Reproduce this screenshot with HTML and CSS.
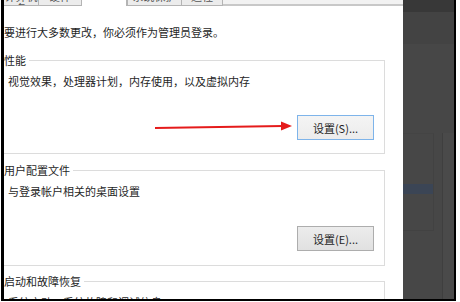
FILE: index.html
```html
<!DOCTYPE html>
<html>
  <head>
    <meta charset="UTF-8" />
    <title>系统属性 - 高级</title>
    <link rel="stylesheet" href="styles.css">
  </head>
  <body>
    <div class="frame">
      <div class="dialog">
        <div class="tabs">
          <div class="tab tab-first"><span>计算机名</span></div>
          <div class="tab tab-hw"><span>硬件</span></div>
          <div class="tab tab-active"></div>
          <div class="tab tab-prot"><span>系统保护</span></div>
          <div class="tab tab-remote"><span>远程</span></div>
          <div class="tab-rest"></div>
        </div>

        <p class="note">要进行大多数更改，你必须作为管理员登录。</p>

        <div class="group">
          <div class="group-title">性能</div>
          <p class="group-desc">视觉效果，处理器计划，内存使用，以及虚拟内存</p>
          <div class="group-actions">
            <button class="btn btn-focus">设置(S)...</button>
          </div>
        </div>

        <div class="group group-profile">
          <div class="group-title">用户配置文件</div>
          <p class="group-desc desc-profile">与登录帐户相关的桌面设置</p>
          <div class="group-actions actions-profile">
            <button class="btn">设置(E)...</button>
          </div>
        </div>

        <div class="group group-startup">
          <div class="group-title">启动和故障恢复</div>
          <p class="group-desc">系统启动、系统故障和调试信息</p>
        </div>

        <svg class="arrow" width="138" height="16" viewBox="0 0 138 16">
          <path d="M0 10 L128 8" stroke="#e51b1b" stroke-width="2" fill="none" />
          <polygon points="126,3.5 137,8 126,12.5" fill="#e51b1b" />
        </svg>
      </div>

      <div class="backdrop">
        <div class="bd-top"></div>
        <div class="bd-bar"></div>
        <div class="bd-body">
          <div class="bd-main">
            <div class="bd-panel">
              <div class="bd-sel"></div>
            </div>
          </div>
          <div class="bd-side"></div>
        </div>
      </div>
    </div>
  </body>
</html>
```

FILE: styles.css
```css
body {
  margin: 0;
  background: #ffffff;
  font-family: "Noto Sans CJK SC", "Microsoft YaHei", sans-serif;
  font-size: 11px;
  color: #1f1f1f;
}

.frame {
  display: flex;
  margin-left: 1px;
  width: 455px;
  height: 301px;
  box-sizing: border-box;
  border-left: 3px solid #000;
  border-right: 2px solid #000;
  border-bottom: 2px solid #000;
  overflow: hidden;
}

.dialog {
  position: relative;
  width: 399px;
  flex: none;
  background: #fff;
  overflow: hidden;
}

/* tab strip, only the bottom edge is visible */
.tabs {
  display: flex;
  height: 6px;
}

.tab {
  height: 6px;
  box-sizing: border-box;
  overflow: hidden;
  background: #ececec;
  border-right: 1px solid #b4b4b4;
  border-bottom: 1px solid #b4b4b4;
  text-align: center;
  color: #555;
}

.tab span {
  display: block;
  margin-top: -10px;
  line-height: 12px;
}

.tab-first {
  width: 35px;
}

.tab-hw {
  width: 43px;
}

.tab-active {
  width: 45px;
  background: #fff;
  border-bottom: none;
}

.tab-prot {
  width: 55px;
  border-left: 1px solid #b4b4b4;
}

.tab-remote {
  width: 41px;
}

.tab-rest {
  flex: 1;
  height: 6px;
  box-sizing: border-box;
  background: #f2f2f2;
  border-bottom: 2px solid #c8c8c8;
}

.note {
  margin: 20px 0 0;
  line-height: 13px;
  white-space: nowrap;
}

.group {
  margin: 21px 18px 0 -10px;
  border: 1px solid #dcdcdc;
  padding-bottom: 13px;
}

.group-title {
  width: fit-content;
  margin: -7px 0 0 9px;
  padding-right: 3px;
  line-height: 13px;
  background: #fff;
  white-space: nowrap;
}

.group-desc {
  margin: 8px 0 0 13px;
  line-height: 13px;
  white-space: nowrap;
}

.group-actions {
  display: flex;
  justify-content: flex-end;
  margin-top: 27px;
  padding-right: 10px;
}

.actions-profile {
  margin-top: 28px;
}

.group-profile {
  margin-top: 16px;
  padding-bottom: 14px;
}

.desc-profile {
  margin-top: 8px;
}

.group-startup {
  margin-top: 15px;
  padding-bottom: 20px;
}

.btn {
  display: block;
  width: 77px;
  height: 25px;
  padding: 0;
  font-family: inherit;
  font-size: 11px;
  color: #1f1f1f;
  border: 1px solid #adadad;
  background: linear-gradient(#ececec, #e1e1e1);
}

.btn-focus {
  border-color: #7eb4ea;
  background: linear-gradient(#f4f4f4, #ececec);
}

.arrow {
  position: absolute;
  left: 151px;
  top: 118px;
}

/* dimmed window behind the dialog */
.backdrop {
  flex: 1;
  display: flex;
  flex-direction: column;
  background: #474747;
}

.bd-top {
  height: 12px;
  background: #383838;
}

.bd-bar {
  height: 32px;
  background: #434343;
}

.bd-body {
  flex: 1;
  display: flex;
}

.bd-main {
  width: 39px;
}

.bd-panel {
  width: 30px;
  height: 96px;
  margin-top: 89px;
  border-top: 1px solid #444;
  border-right: 1px solid #424242;
  border-bottom: 1px solid #424242;
}

.bd-sel {
  height: 10px;
  margin-top: 50px;
  background: #3b4555;
}

.bd-side {
  flex: 1;
  margin-top: 89px;
  border-left: 1px solid #3f3f3f;
  background: #4a4a4a;
}
```
